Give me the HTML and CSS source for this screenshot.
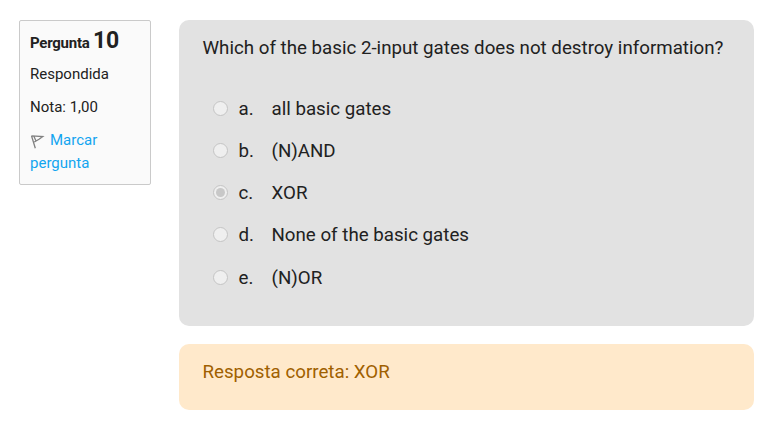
FILE: index.html
```
<!DOCTYPE html>
<html lang="pt">
<head>
<meta charset="utf-8">
<title>Pergunta 10</title>
<link rel="stylesheet" href="styles.css">
</head>
<body>
<main class="question">
  <aside class="info">
    <h3 class="number">Pergunta <span class="qno">10</span></h3>
    <div class="state">Respondida</div>
    <div class="grade">Nota: 1,00</div>
    <a class="flag"><svg class="flag-icon" width="16" height="16" viewBox="0 0 16 16"><path d="M1.500 2.800L5.300 15.300M1.500 2.800L12.800 3.500L9 6.300L4.300 9M4 3.500L6 8" fill="none" stroke="#808080" stroke-width="1.300"/></svg>Marcar pergunta</a>
  </aside>
  <div class="content">
    <section class="formulation">
      <p class="qtext">Which of the basic 2-input gates does not destroy information?</p>
      <div class="answers">
        <label class="answer"><span class="radio"></span><span class="letter">a.</span><span class="text">all basic gates</span></label>
        <label class="answer"><span class="radio"></span><span class="letter">b.</span><span class="text">(N)AND</span></label>
        <label class="answer"><span class="radio checked"></span><span class="letter">c.</span><span class="text">XOR</span></label>
        <label class="answer"><span class="radio"></span><span class="letter">d.</span><span class="text">None of the basic gates</span></label>
        <label class="answer"><span class="radio"></span><span class="letter">e.</span><span class="text">(N)OR</span></label>
      </div>
    </section>
    <section class="outcome">Resposta correta: XOR</section>
  </div>
</main>
</body>
</html>
```
FILE: styles.css
```
* { box-sizing: border-box; }
body { margin: 0; background: #fff; color: #212121; font-family: Roboto, sans-serif; }
.question { display: flex; align-items: flex-start; gap: 28px; padding: 20px 15px 0 19px; }
.info { width: 132px; height: 165px; padding: 8px 10px; border: 1px solid #cacaca; border-radius: 2px; background: #fafafa; font-size: 15px; line-height: 23px; }
.number { margin: 0; font-size: 15px; line-height: 23px; font-weight: 700; letter-spacing: -0.25px; white-space: nowrap; }
.qno { font-size: 23px; }
.state { margin-top: 8px; }
.grade { margin-top: 10px; }
.flag { display: block; margin-top: 10px; color: #12a5f0; }
.flag-icon { margin-right: 4px; vertical-align: -4px; }
.content { width: 575px; }
.formulation { height: 306px; padding: 15px 23.500px; border-radius: 10px; background: #e2e2e2; font-size: 18.730px; line-height: 27px; }
.qtext { margin: 0; white-space: nowrap; }
.answers { display: flex; flex-direction: column; gap: 13.140px; margin-top: 32px; padding-left: 10px; }
.answer { display: flex; align-items: center; }
.letter, .text { padding-top: 2px; }
.radio { display: flex; align-items: center; justify-content: center; width: 15px; height: 15px; margin-right: 11px; border: 1px solid #c4c4c4; border-radius: 50%; background: #efefef; }
.checked::after { content: ""; width: 9px; height: 9px; border-radius: 50%; background: #c8c8c8; }
.letter { width: 33px; }
.outcome { height: 66px; margin-top: 18px; padding: 15px 23.500px; border-radius: 10px; background: #ffe9cb; color: #9f6000; font-size: 18.730px; line-height: 27px; }
```
